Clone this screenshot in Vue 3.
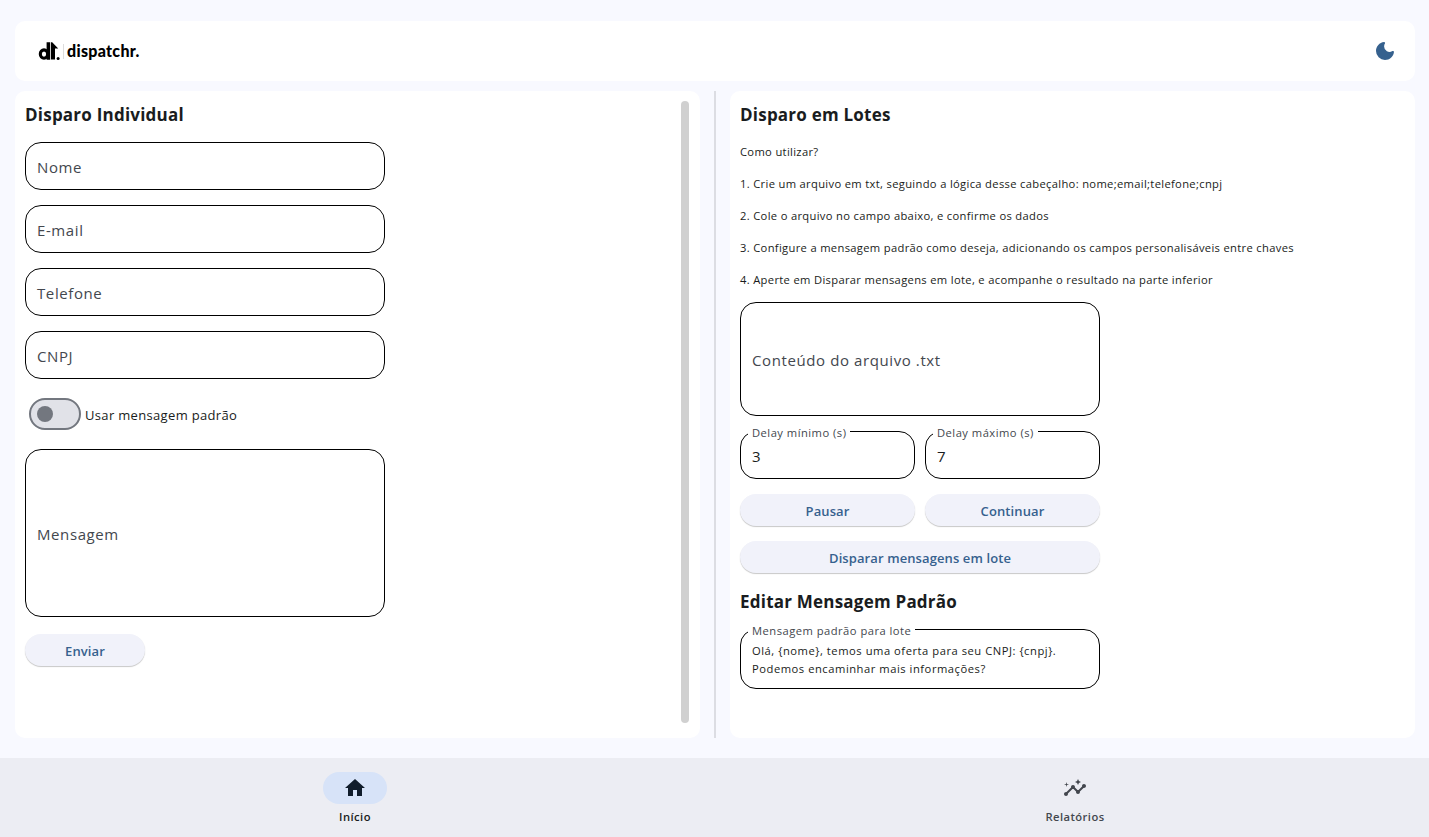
<script setup>
import { ref } from 'vue'

const people = ['Nome', 'E-mail', 'Telefone', 'CNPJ']
const steps = [
  'Como utilizar?',
  '1. Crie um arquivo em txt, seguindo a lógica desse cabeçalho: nome;email;telefone;cnpj',
  '2. Cole o arquivo no campo abaixo, e confirme os dados',
  '3. Configure a mensagem padrão como deseja, adicionando os campos personalisáveis entre chaves',
  '4. Aperte em Disparar mensagens em lote, e acompanhe o resultado na parte inferior',
]
const delays = [
  { label: 'Delay mínimo (s)', value: '3' },
  { label: 'Delay máximo (s)', value: '7' },
]
const useDefault = ref(false)
</script>

<template>
  <div class="app">
    <header class="topbar card">
      <div class="brand">
        <svg class="mark" width="23" height="20" viewBox="0 0 23 20">
          <ellipse cx="6" cy="13.1" rx="3.7" ry="4.2" fill="none" stroke="#000" stroke-width="3.1" />
          <path d="M8.6 1.2h3.6v17.6H8.600zM13 1.200h1.200l6 6.200h-3.200v11.200H13z" />
          <circle cx="20.1" cy="17.4" r="1.5" />
        </svg>
        <i class="brand-rule"></i>
        <span class="wordmark">dispatchr.</span>
      </div>
      <svg class="moon" width="24" height="24" viewBox="0 0 24 24">
        <path d="M11.01 3.05C6.51 3.54 3 7.36 3 12a9 9 0 0 0 9 9c4.63 0 8.45-3.5 8.95-8 .09-.79-.78-1.42-1.54-.95A5.403 5.403 0 0 1 11.1 7.5c0-1.06.31-2.06.84-2.89.45-.67-.04-1.63-.93-1.56z" />
      </svg>
    </header>

    <main class="content">
      <section class="panel card">
        <h2>Disparo Individual</h2>
        <div v-for="p in people" :key="p" class="field">{{ p }}</div>
        <div class="switch-row">
          <button class="switch" :class="{ on: useDefault }" @click="useDefault = !useDefault"><i></i></button>
          <span>Usar mensagem padrão</span>
        </div>
        <div class="field message">Mensagem</div>
        <button class="btn send">Enviar</button>
        <i class="scrollbar"></i>
      </section>

      <i class="divider"></i>

      <section class="panel card">
        <h2>Disparo em Lotes</h2>
        <p v-for="s in steps" :key="s">{{ s }}</p>
        <div class="field file">Conteúdo do arquivo .txt</div>
        <div class="pair">
          <fieldset v-for="d in delays" :key="d.label" class="outlined">
            <legend>{{ d.label }}</legend>
            <div class="value">{{ d.value }}</div>
          </fieldset>
        </div>
        <div class="pair">
          <button class="btn">Pausar</button>
          <button class="btn">Continuar</button>
        </div>
        <button class="btn wide">Disparar mensagens em lote</button>
        <h2>Editar Mensagem Padrão</h2>
        <fieldset class="outlined template">
          <legend>Mensagem padrão para lote</legend>
          <div class="body">Olá, {nome}, temos uma oferta para seu CNPJ: {cnpj}.<br />Podemos encaminhar mais informações?</div>
        </fieldset>
      </section>
    </main>

    <nav class="nav">
      <a class="tab active">
        <span class="pill">
          <svg width="24" height="24" viewBox="0 0 24 24"><path d="M10 20v-6h4v6h5v-8h3L12 3 2 12h3v8z" /></svg>
        </span>
        <span class="tab-label">Início</span>
      </a>
      <a class="tab">
        <span class="pill">
          <svg width="24" height="24" viewBox="0 0 24 24">
            <path d="M21 8c-1.45 0-2.26 1.44-1.93 2.51l-3.55 3.56c-.3-.09-.74-.09-1.04 0l-2.55-2.55C12.27 10.45 11.46 9 10 9c-1.45 0-2.27 1.44-1.93 2.52l-4.56 4.55C2.44 15.74 1 16.55 1 18c0 1.1.9 2 2 2 1.45 0 2.26-1.44 1.93-2.51l4.55-4.56c.3.09.74.09 1.04 0l2.55 2.55C12.73 16.55 13.54 18 15 18c1.45 0 2.27-1.44 1.93-2.52l3.56-3.55c1.07.33 2.51-.48 2.51-1.93 0-1.1-.9-2-2-2z" />
            <path d="M15 9l.94-2.07L18 6l-2.06-.93L15 3l-.92 2.07L12 6l2.08.93zM3.5 11L4 9l2-.5L4 8l-.5-2L3 8l-2 .5L3 9z" />
          </svg>
        </span>
        <span class="tab-label">Relatórios</span>
      </a>
    </nav>
  </div>
</template>

<style>
body {
  margin: 0;
  overflow: hidden;
}
</style>

<style scoped>
* {
  box-sizing: border-box;
}
.app {
  height: 837px;
  padding-top: 21px;
  display: flex;
  flex-direction: column;
  background: #f8f9ff;
  color: #191c20;
  font-family: 'Open Sans', 'Noto Sans', sans-serif;
}
.card {
  background: #fff;
  border-radius: 10px;
}
.topbar {
  height: 60px;
  margin: 0 14px 10px 15px;
  padding: 0 18px 0 23px;
  display: flex;
  align-items: center;
  justify-content: space-between;
}
.brand {
  display: flex;
  align-items: center;
}
.mark {
  margin-top: -1px;
}
.brand-rule {
  width: 1px;
  height: 15px;
  margin: 0 3px 0 2px;
  background: #ddd;
}
.wordmark {
  font: 900 16px/20px Lato, sans-serif;
  letter-spacing: 0.3px;
  color: #000;
}
.moon {
  fill: #36618e;
}
.content {
  height: 647px;
  margin: 0 14px 20px 15px;
  display: flex;
  justify-content: space-between;
}
.panel {
  position: relative;
  width: 685px;
  padding: 10px;
  display: flex;
  flex-direction: column;
  align-items: flex-start;
  gap: 15px;
}
.divider {
  width: 2px;
  background: #dcdde3;
}
.scrollbar {
  position: absolute;
  top: 10px;
  right: 11.5px;
  width: 8px;
  height: 622px;
  border-radius: 4px;
  background: #d0d0d0;
}
h2 {
  margin: 0;
  height: 26px;
  font-size: 17px;
  line-height: 28px;
  font-weight: 700;
  letter-spacing: 0.22px;
  white-space: nowrap;
}
p {
  margin: 0;
  height: 17px;
  font-size: 11.2px;
  line-height: 19px;
  letter-spacing: 0.325px;
  white-space: nowrap;
}
.field {
  width: 360px;
  height: 48px;
  padding: 1px 11px 0;
  display: flex;
  align-items: center;
  border: 1px solid #000;
  border-radius: 16px;
  font-size: 15px;
  letter-spacing: 0.6px;
  color: #43474e;
}
.message {
  height: 168px;
}
.file {
  height: 114px;
}
.switch-row {
  height: 40px;
  padding-left: 4px;
  display: flex;
  align-items: center;
  gap: 4px;
  font-size: 13px;
  letter-spacing: 0.33px;
}
.switch-row span {
  padding-top: 2px;
}
.switch {
  width: 52px;
  height: 32px;
  padding: 0 6px;
  display: flex;
  align-items: center;
  border: 2px solid #73777f;
  border-radius: 16px;
  background: #e1e2e8;
}
.switch i {
  width: 16px;
  height: 16px;
  border-radius: 50%;
  background: #73777f;
}
.switch.on {
  justify-content: flex-end;
}
.pair {
  width: 360px;
  display: grid;
  grid-template-columns: 1fr 1fr;
  gap: 10px;
}
.outlined {
  min-width: 0;
  height: 55px;
  margin: -7px 0 0;
  padding: 0 7px;
  border: 1px solid #000;
  border-radius: 16px;
}
legend {
  height: 15px;
  padding: 0 4px;
  font-size: 11.2px;
  line-height: 18px;
  letter-spacing: 0.48px;
  color: #43474e;
  white-space: nowrap;
}
.value {
  padding: 7px 4px 0;
  font-size: 15px;
  line-height: 20px;
}
.template {
  width: 360px;
  height: 67px;
}
.body {
  padding: 5px 4px 0;
  font-size: 11.2px;
  line-height: 18px;
  letter-spacing: 0.53px;
  white-space: nowrap;
}
.btn {
  height: 32px;
  padding: 2px 0 0;
  border: 0;
  border-radius: 16px;
  background: #f1f2fa;
  box-shadow: 0 1px 1px rgba(0, 0, 0, 0.22);
  color: #36618e;
  font-family: inherit;
  font-size: 13px;
  font-weight: 600;
  letter-spacing: 0.1px;
}
.send {
  width: 120px;
  margin-top: 2px;
}
.wide {
  width: 360px;
}
.nav {
  height: 79px;
  display: flex;
  background: #ecedf3;
}
.tab {
  width: 720px;
  flex: none;
  padding-top: 14px;
  padding-right: 10px;
  display: flex;
  flex-direction: column;
  align-items: center;
  fill: #43474e;
  color: #43474e;
}
.pill {
  width: 64px;
  height: 32px;
  display: flex;
  align-items: center;
  justify-content: center;
  border-radius: 16px;
}
.tab-label {
  margin-top: 4px;
  font-size: 11.2px;
  line-height: 18px;
  font-weight: 600;
  letter-spacing: 0.45px;
}
.active {
  color: #191c20;
  fill: #101c2b;
}
.active .pill {
  background: #d7e3f8;
}
</style>
